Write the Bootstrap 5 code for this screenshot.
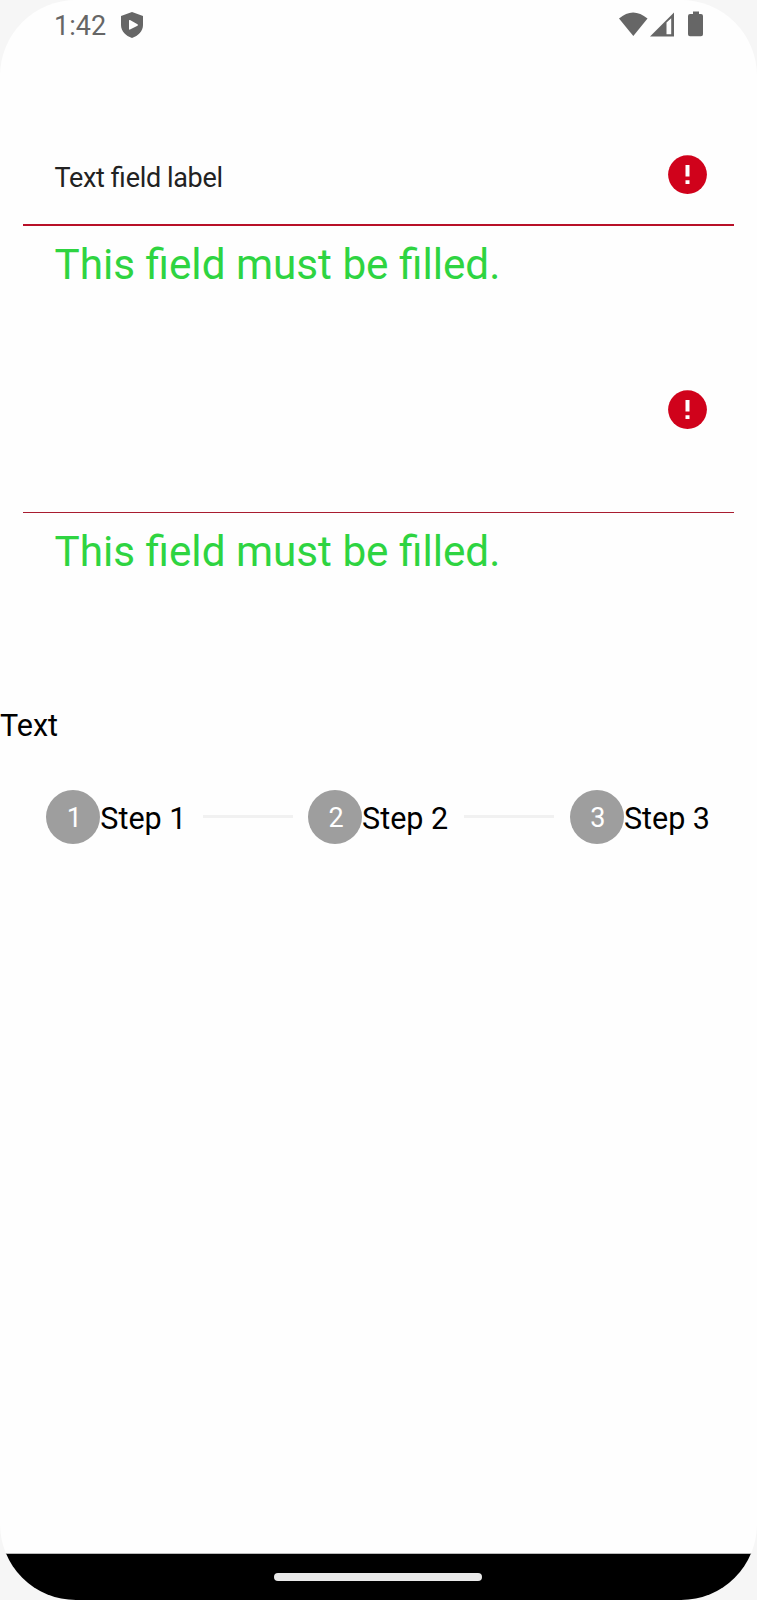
<!DOCTYPE html>
<html lang="en">
<head>
<meta charset="utf-8">
<meta name="viewport" content="width=device-width, initial-scale=1">
<title>Form steps</title>
<link href="https://cdn.jsdelivr.net/npm/bootstrap@5.3.0/dist/css/bootstrap.min.css" rel="stylesheet">
<style>
body { background: #f6f6f6; font-family: Roboto, sans-serif; color: #000; }
svg { display: block; flex: none; }
.screen { height: 1600px; border-radius: 76px; background: #fefefe; }
.status { height: 155px; padding: 6px 52px 0 54px; color: #666; }
.clock { font-size: 27px; line-height: 40px; width: 67px; }
.shield-icon { margin-top: 6px; }
.system-icons { margin-top: 4px; }
.field-box { margin: 0 23px; padding: 0 27px 0 31.5px; border-bottom: 2px solid #b81028; }
.field-one { height: 71px; }
.field-two { height: 123px; border-bottom: 1px solid #a81c30; }
.field-label { font-size: 27px; line-height: 40px; padding-top: 3px; color: #222; letter-spacing: -.36px; }
.ligature { letter-spacing: 0; }
.help { margin: 14px 0 0 54.5px; font-size: 42.25px; line-height: 50px; color: #2ed441; }
.help-one { margin-bottom: 100px; }
.caption-text { margin-top: 129px; font-size: 30.5px; line-height: 40px; }
.steps { margin: 43.600px 0 0 46.300px; height: 54px; }
.step-item { width: 261.800px; }
.step-dot { width: 54px; height: 54px; flex: none; background: #9e9e9e; color: #fff; font-size: 27px; line-height: 30px; padding: 3px 0 0 2px; }
.step-name { font-size: 30.5px; line-height: 36px; padding-top: 5px; white-space: nowrap; width: 102.300px; flex: none; }
.step-line { width: 90px; height: 3px; background: #f1f1f1; }
.nav-strip { height: 47px; background: #000; border-top: 1px solid #bbb; padding-right: 1px; }
.home-pill { width: 208px; height: 8px; border-radius: 4px; background: #e9e9e9; }
</style>
</head>
<body>
<main class="screen d-flex flex-column overflow-hidden">
  <header class="status d-flex align-items-start">
    <span class="clock">1:42</span>
    <svg class="shield-icon" width="22" height="26" viewBox="0 0 22 26"><path fill="#666" fill-rule="evenodd" d="M11 0 22 4v9c0 6-4.700 11-11 13C4.700 24 0 19 0 13V4Zm-3 8.500v8.500q0 1 1 .6l7.500-3.900q1-.7 0-1.400L9 8q-1-.4-1 .5Z"/></svg>
    <svg class="system-icons ms-auto" width="86" height="28" viewBox="0 0 86 28" fill="#666">
      <path d="M0 8.500Q14-3.500 28.500 8.500L14.300 26Z"/>
      <path fill-rule="evenodd" d="M31 26.500 55 2.500v24ZM47.500 12.500v11.800h4.700v-16Z"/>
      <path d="M74 1.500h6v2.500h2q2 0 2 2v18.300q0 2-2 2H71q-2 0-2-2V6q0-2 2-2h3Z"/>
    </svg>
  </header>
  <section>
    <div class="field-box field-one d-flex justify-content-between align-items-start">
      <span class="field-label">Text <span class="ligature">fi</span>eld label</span>
      <svg width="39" height="39" viewBox="0 0 39 39"><circle cx="19.500" cy="19.600" r="19.400" fill="#d0021b"/><path fill="#fff" d="M17.500 10h4v11.500h-4Zm0 15.200h4V29h-4Z"/></svg>
    </div>
    <p class="help help-one">This field must be filled.</p>
    <div class="field-box field-two d-flex justify-content-end">
      <svg width="39" height="39" viewBox="0 0 39 39"><circle cx="19.500" cy="19.600" r="19.400" fill="#d0021b"/><path fill="#fff" d="M17.500 10h4v11.500h-4Zm0 15.200h4V29h-4Z"/></svg>
    </div>
    <p class="help">This field must be filled.</p>
  </section>
  <div class="caption-text">Text</div>
  <div class="steps d-flex">
    <div class="step-item d-flex align-items-center">
      <span class="step-dot rounded-circle d-flex align-items-center justify-content-center">1</span><span class="step-name">Step 1</span><span class="step-line"></span>
    </div>
    <div class="step-item d-flex align-items-center">
      <span class="step-dot rounded-circle d-flex align-items-center justify-content-center">2</span><span class="step-name">Step 2</span><span class="step-line"></span>
    </div>
    <div class="d-flex align-items-center">
      <span class="step-dot rounded-circle d-flex align-items-center justify-content-center">3</span><span class="step-name">Step 3</span>
    </div>
  </div>
  <footer class="nav-strip mt-auto d-flex align-items-center justify-content-center"><span class="home-pill"></span></footer>
</main>
<script src="https://cdn.jsdelivr.net/npm/bootstrap@5.3.0/dist/js/bootstrap.bundle.min.js"></script>
</body>
</html>
